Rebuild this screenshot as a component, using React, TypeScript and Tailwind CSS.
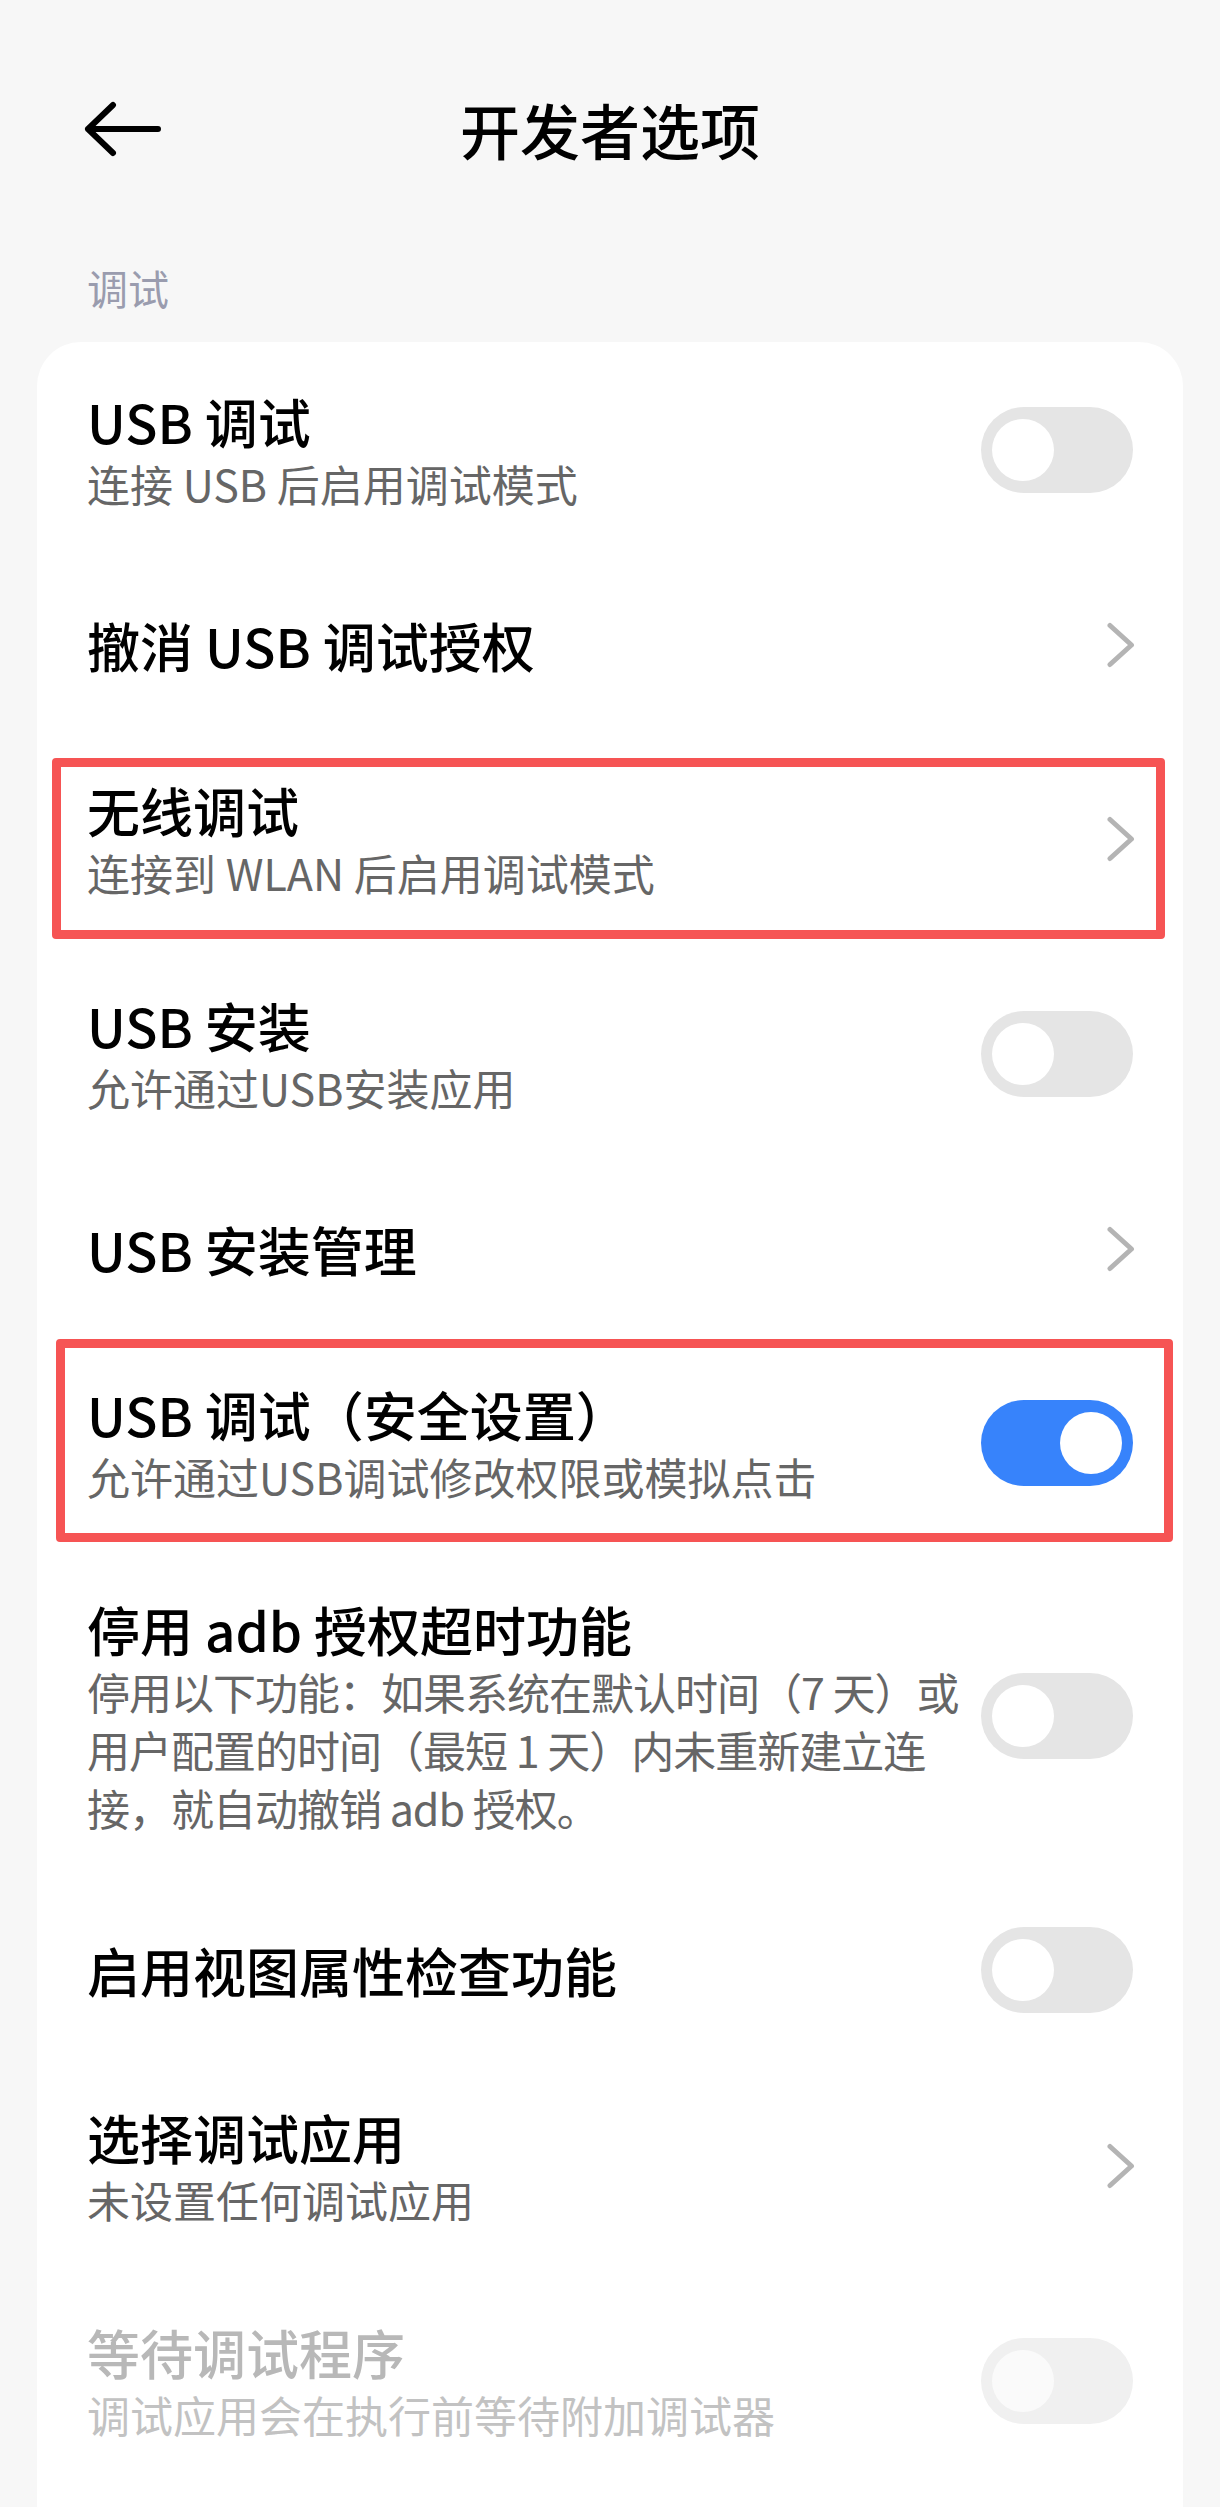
import React from "react";

const FONT = { fontFamily: '"Noto Sans CJK SC", "Noto Sans", sans-serif' };

function Toggle({ on = false, disabled = false }: { on?: boolean; disabled?: boolean }) {
  const track = on ? "bg-[#3783fb] justify-end" : disabled ? "bg-[#f0f0f0] justify-start" : "bg-[#e5e5e5] justify-start";
  const knob = disabled ? "bg-[#fafafa]" : "bg-white";
  return (
    <div className={`flex h-[86px] w-[152px] shrink-0 items-center rounded-full px-[11px] ${track}`}>
      <div className={`h-[62px] w-[62px] rounded-full ${knob}`} />
    </div>
  );
}

function Chevron() {
  return (
    <svg width="28" height="46" viewBox="0 0 28 46" className="mr-[-2px] shrink-0">
      <path d="M3 3.5 L24.5 23 L3 42.5" fill="none" stroke="#b4b4b4" strokeWidth="5" strokeLinecap="round" strokeLinejoin="round" />
    </svg>
  );
}

type RowProps = {
  title: string;
  sub?: string[];
  control: "toggle" | "toggleOn" | "chevron" | "toggleDisabled";
  disabled?: boolean;
  box?: string;
  tight?: boolean;
};

function Row({ title, sub, control, disabled, box, tight }: RowProps) {
  return (
    <div className="relative flex min-h-[174px] items-center pl-[50px] pr-[50px] pt-[46px] pb-[45px]">
      {box && <div className={`pointer-events-none absolute rounded-[4px] border-[9px] border-[#f65454] ${box}`} />}
      <div className="flex min-w-0 flex-1 flex-col">
        <div className={`text-[53px] font-medium leading-[66px] whitespace-nowrap ${disabled ? "text-[#b8b8b8]" : "text-black"}`}>{title}</div>
        {sub &&
          sub.map((s, i) => (
            <div
              key={i}
              className={`text-[43px] leading-[58px] whitespace-nowrap ${tight ? "tracking-[-1px]" : ""} ${disabled ? "text-[#c2c2c2]" : "text-[#666666]"}`}
            >
              {s}
            </div>
          ))}
      </div>
      <div className="ml-[20px] flex shrink-0 items-center">
        {control === "chevron" && <Chevron />}
        {control === "toggle" && <Toggle />}
        {control === "toggleOn" && <Toggle on />}
        {control === "toggleDisabled" && <Toggle disabled />}
      </div>
    </div>
  );
}

export default function App() {
  return (
    <div className="h-[2507px] w-[1220px] overflow-hidden bg-[#f7f7f7]" style={FONT}>
      <div className="grid h-[258px] grid-cols-[1fr_auto_1fr] items-center">
        <div className="pl-[84px]">
          <svg width="78" height="56" viewBox="0 0 78 56">
            <path d="M29 4 L4 28 L29 52 M4 28 L74 28" fill="none" stroke="#000" strokeWidth="6" strokeLinecap="round" strokeLinejoin="round" />
          </svg>
        </div>
        <div className="text-[60px] font-medium leading-[70px] text-black">开发者选项</div>
        <div />
      </div>
      <div className="px-[87px] text-[41px] leading-[58px] text-[#9a9cae]">调试</div>
      <div className="mx-[37px] mt-[26px] rounded-[44px] bg-white pb-[60px]">
        <Row title="USB 调试" sub={["连接 USB 后启用调试模式"]} control="toggle" />
        <Row title="撤消 USB 调试授权" control="chevron" />
        <Row title="无线调试" sub={["连接到 WLAN 后启用调试模式"]} control="chevron" box="left-[15px] right-[18px] top-[27px] bottom-[7px]" />
        <Row title="USB 安装" sub={["允许通过USB安装应用"]} control="toggle" />
        <Row title="USB 安装管理" control="chevron" />
        <Row title="USB 调试（安全设置）" sub={["允许通过USB调试修改权限或模拟点击"]} control="toggleOn" box="left-[19px] right-[10px] top-[4px] bottom-[8px]" />
        <Row
          title="停用 adb 授权超时功能"
          sub={["停用以下功能：如果系统在默认时间（7 天）或", "用户配置的时间（最短 1 天）内未重新建立连", "接，就自动撤销 adb 授权。"]}
          control="toggle"
          tight
        />
        <Row title="启用视图属性检查功能" control="toggle" />
        <Row title="选择调试应用" sub={["未设置任何调试应用"]} control="chevron" />
        <Row title="等待调试程序" sub={["调试应用会在执行前等待附加调试器"]} control="toggleDisabled" disabled />
      </div>
    </div>
  );
}
